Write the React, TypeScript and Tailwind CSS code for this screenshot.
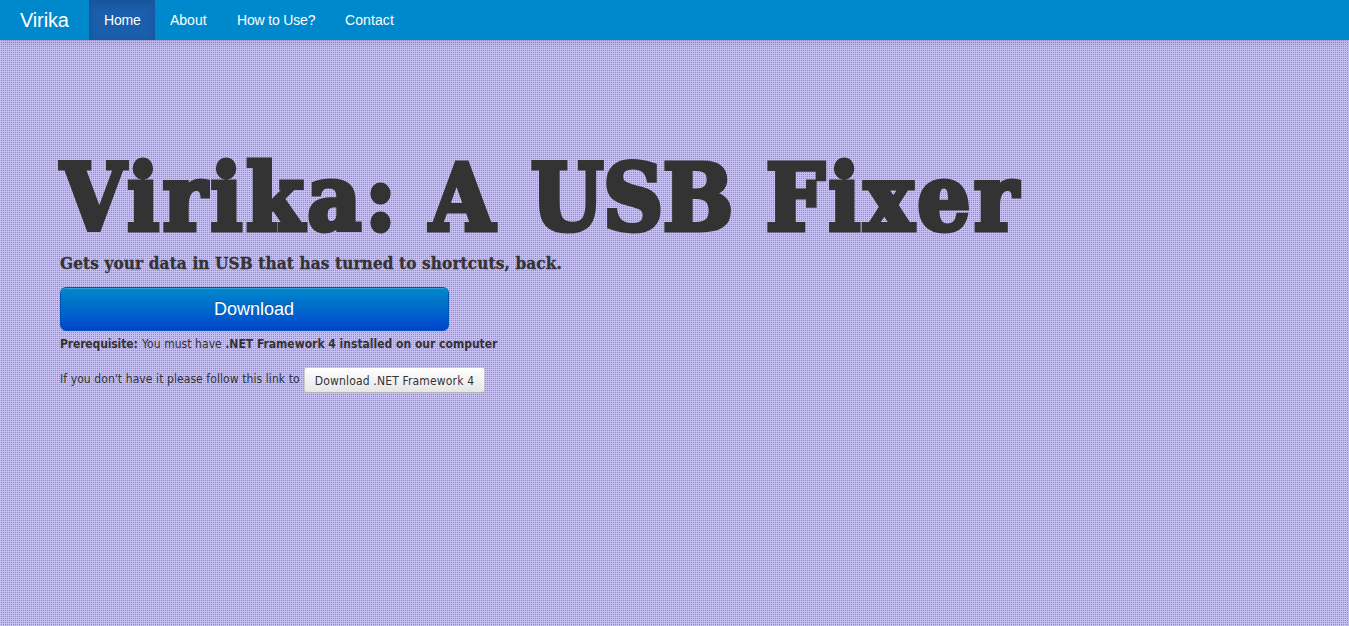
const words = [
  { text: 'Virika:', box: 'w-[369px] pl-px tracking-[4px]' },
  { text: 'A', box: 'w-[102px] pl-px' },
  { text: 'USB', box: 'w-[235px]' },
  { text: 'Fixer', box: 'w-[260px] tracking-[4px]' },
];

const links = [
  { text: 'Home', box: 'w-[66px] bg-[#1a5eac] shadow-[inset_0_3px_8px_rgba(0,0,0,0.125)] tracking-[-0.15px]' },
  { text: 'About', box: 'w-[67px]' },
  { text: 'How to Use?', box: 'w-[108px] tracking-[-0.17px]' },
  { text: 'Contact', box: 'w-[80px] tracking-[0.1px]' },
];

export default function App() {
  return (
    <div className="min-h-screen bg-[#c4bef3] bg-[conic-gradient(from_90deg_at_1px_1px,transparent_75%,#918abd_0)] bg-size-[2px_2px] font-['DejaVu_Sans_Condensed','DejaVu_Sans',sans-serif] text-[12px] text-[#333]">
      <header className="flex h-10 items-stretch bg-[#0088cc] font-['Liberation_Sans',sans-serif] text-[14px] text-white shadow-[0_1px_10px_rgba(0,0,0,0.1)]">
        <a href="#" className="flex w-[89px] items-center pl-5 text-[20px] tracking-[-0.15px]">Virika</a>
        <nav className="flex">
          {links.map((link) => (
            <a key={link.text} href="#" className={`flex items-center pl-[15px] whitespace-nowrap ${link.box}`}>
              {link.text}
            </a>
          ))}
        </nav>
      </header>
      <main className="px-[60px] pt-[105px]">
        <h1 className="flex h-[105px] items-center whitespace-nowrap font-['DejaVu_Serif_Condensed','DejaVu_Serif',serif] text-[92px] leading-[105px] font-bold [-webkit-text-stroke:5px_#333]">
          {words.map((word) => (
            <span key={word.text} className={`relative top-px ${word.box}`}>{word.text}</span>
          ))}
        </h1>
        <h3 className="flex h-[27px] items-center whitespace-nowrap font-['DejaVu_Serif_Condensed','DejaVu_Serif',serif] text-[17px] font-bold tracking-[0.14px] [-webkit-text-stroke:0.3px_#333]">
          <span>Gets your data in USB that has turned to shortcuts, back.</span>
        </h3>
        <a
          href="#"
          className="mt-[10px] flex h-11 w-[389px] items-center justify-center rounded-[6px] border border-[#0055bb] bg-linear-to-b from-[#0088cc] to-[#0044cc] pr-px font-['Liberation_Sans',sans-serif] text-[18px] text-white shadow-[inset_0_1px_0_rgba(255,255,255,0.2),0_1px_2px_rgba(0,0,0,0.05)] [text-shadow:0_-1px_0_rgba(0,0,0,0.25)]"
        >
          Download
        </a>
        <p className="h-[26px] leading-[26px] whitespace-nowrap">
          <strong className="mr-px tracking-[-0.13px]">Prerequisite:</strong> <span className="tracking-[0.06px]">You must have</span>{' '}
          <strong>.NET Framework 4 installed on our computer</strong>
        </p>
        <p className="mt-[10px] flex h-[26px] whitespace-nowrap">
          <span className="w-[244px] leading-[24px] tracking-[0.085px]">If you don't have it please follow this link to</span>
          <a
            href="#"
            className="flex w-[181px] items-center justify-center rounded-[3px] border border-[#ccc] border-b-[#b3b3b3] bg-linear-to-b from-white to-[#e6e6e6] pt-px tracking-[0.16px] shadow-[inset_0_1px_0_rgba(255,255,255,0.2)]"
          >
            Download .NET Framework 4
          </a>
        </p>
      </main>
    </div>
  );
}
